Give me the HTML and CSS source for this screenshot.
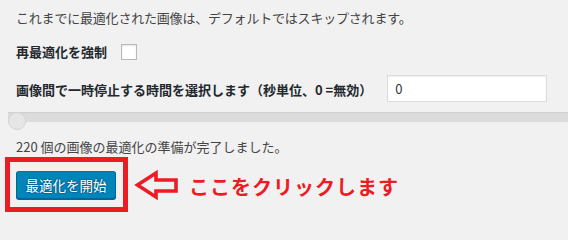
FILE: index.html
```html
<!DOCTYPE html>
<html lang="ja">
<head>
<meta charset="utf-8">
<link rel="stylesheet" href="styles.css">
</head>
<body>
<div class="wrap">
  <p class="note">これまでに最適化された画像は、デフォルトではスキップされます。</p>
  <div class="row row-force">
    <label class="lbl">再最適化を強制</label>
    <span class="checkbox"></span>
  </div>
  <div class="row row-delay">
    <label class="lbl">画像間で一時停止する時間を選択します（秒単位、0 =無効）</label>
    <input class="num" type="text" value="0">
  </div>
  <div class="slider">
    <div class="track"></div>
    <div class="thumb"></div>
  </div>
  <p class="status">220 個の画像の最適化の準備が完了しました。</p>
  <div class="action">
    <div class="redbox">
      <button class="btn">最適化を開始</button>
    </div>
    <svg class="arrow" width="46" height="32" viewBox="0 0 46 32">
      <polygon points="3.5,16 22,4 22,11 42,11 42,22 22,22 22,28" fill="none" stroke="#ec1c24" stroke-width="3.6" stroke-linejoin="miter"/>
    </svg>
    <span class="callout">ここをクリックします</span>
  </div>
</div>
</body>
</html>
```
FILE: styles.css
```css
html, body {
  margin: 0;
  padding: 0;
  background: #f1f1f1;
}
body {
  font-family: "Noto Sans CJK JP", "Noto Sans", sans-serif;
  font-size: 13px;
  color: #444;
  width: 568px;
  height: 230px;
  overflow: hidden;
}
.wrap {
  padding: 8px 0 0 16px;
}
.note {
  margin: 0;
  height: 20px;
  line-height: 20px;
  letter-spacing: -0.2px;
}
.row {
  display: flex;
  align-items: center;
}
.lbl {
  font-weight: bold;
  color: #23282d;
  line-height: 20px;
}
.row-force {
  margin-top: 16px;
  height: 16px;
  gap: 14px;
}
.checkbox {
  display: block;
  width: 14px;
  height: 14px;
  background: #fff;
  border: 1px solid #b4b9be;
  box-shadow: inset 0 1px 2px rgba(0,0,0,0.1);
}
.row-delay {
  margin-top: 15px;
  height: 27px;
  gap: 15px;
}
.row-delay .lbl {
  margin-top: 3px;
}
.num {
  box-sizing: border-box;
  width: 160px;
  height: 27px;
  margin: 0;
  padding: 0 7px;
  border: 1px solid #ddd;
  background: #fff;
  box-shadow: inset 0 1px 2px rgba(0,0,0,0.07);
  font-family: "Noto Sans CJK JP", "Noto Sans", sans-serif;
  font-size: 13px;
  color: #32373c;
  outline: none;
}
.slider {
  position: relative;
  margin: 10px 0 0 -8px;
  height: 18px;
}
.track {
  margin-top: 4px;
  height: 10px;
  background: #dcdcdc;
  box-shadow: inset 0 1px 1px rgba(0,0,0,0.06);
}
.thumb {
  position: absolute;
  left: 0;
  top: 0;
  width: 16px;
  height: 16px;
  border-radius: 50%;
  background: #e6e6e6;
  border: 1px solid #d3d3d3;
}
.status {
  margin: 7px 0 0;
  height: 20px;
  line-height: 20px;
}
.action {
  display: flex;
  align-items: center;
  margin-left: -11px;
}
.redbox {
  border: 5px solid #ec1c24;
  padding: 9px 7px 8px 6px;
}
.btn {
  display: block;
  box-sizing: border-box;
  width: 100px;
  height: 28px;
  margin: 0;
  padding: 0 0 1px;
  background: #0085ba;
  border: 1px solid;
  border-color: #0073aa #006799 #006799;
  border-radius: 3px;
  box-shadow: 0 1px 0 #006799;
  color: #fff;
  font-family: "Noto Sans CJK JP", "Noto Sans", sans-serif;
  font-size: 13.5px;
  line-height: 26px;
  text-shadow: 0 -1px 1px #006799, 1px 0 1px #006799, 0 1px 1px #006799, -1px 0 1px #006799;
}
.arrow {
  display: block;
  margin-left: 6px;
}
.callout {
  margin-left: 9px;
  margin-top: 4px;
  font-size: 20px;
  font-weight: bold;
  color: #ec1c24;
  letter-spacing: 1px;
}
```
